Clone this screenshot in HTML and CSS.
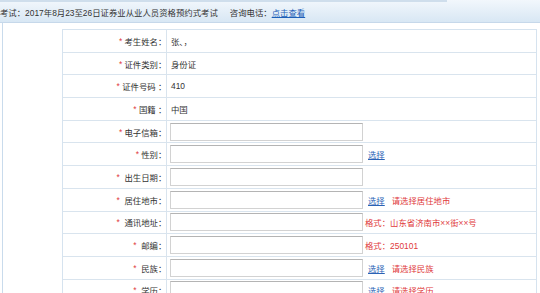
FILE: index.html
```html
<!DOCTYPE html>
<html lang="zh-CN">
<head>
<meta charset="utf-8">
<link rel="stylesheet" href="styles.css">
</head>
<body>
<div class="bar">
  <div class="strip"></div>
  <div class="bar-text">考试：2017年8月23至26日证券业从业人员资格预约式考试<span class="gap"></span>咨询电话：<a class="link" href="#">点击查看</a></div>
</div>
<div class="main">
  <div class="form">
    <div class="row"><div class="lab"><i>*</i> 考生姓名<span class="c">：</span></div><div class="val">张、，</div></div>
    <div class="row"><div class="lab"><i>*</i> 证件类别<span class="c">：</span></div><div class="val">身份证</div></div>
    <div class="row"><div class="lab"><i>*</i> 证件号码 <span class="c">：</span></div><div class="val">410</div></div>
    <div class="row"><div class="lab"><i>*</i> 国籍 <span class="c">：</span></div><div class="val">中国</div></div>
    <div class="row"><div class="lab"><i>*</i> 电子信箱<span class="c">：</span></div><div class="val"><input class="inp" type="text"></div></div>
    <div class="row"><div class="lab"><i>*</i> 性别<span class="c">：</span></div><div class="val"><input class="inp" type="text"><a class="pick" href="#">选择</a></div></div>
    <div class="row"><div class="lab"><i>*</i>&nbsp; 出生日期<span class="c">：</span></div><div class="val"><input class="inp" type="text"></div></div>
    <div class="row"><div class="lab"><i>*</i>&nbsp; 居住地市<span class="c">：</span></div><div class="val"><input class="inp" type="text"><a class="pick" href="#">选择</a><span class="err">请选择居住地市</span></div></div>
    <div class="row"><div class="lab"><i>*</i>&nbsp; 通讯地址<span class="c">：</span></div><div class="val"><input class="inp" type="text"><span class="fmt">格式：山东省济南市××街××号</span></div></div>
    <div class="row"><div class="lab"><i>*</i>&nbsp; 邮编<span class="c">：</span></div><div class="val"><input class="inp" type="text"><span class="fmt">格式：250101</span></div></div>
    <div class="row"><div class="lab"><i>*</i>&nbsp; 民族<span class="c">：</span></div><div class="val"><input class="inp" type="text"><a class="pick" href="#">选择</a><span class="err">请选择民族</span></div></div>
    <div class="row"><div class="lab"><i>*</i>&nbsp; 学历<span class="c">：</span></div><div class="val"><input class="inp" type="text"><a class="pick" href="#">选择</a><span class="err">请选择学历</span></div></div>
  </div>
</div>
</body>
</html>
```
FILE: styles.css
```css
html, body {
  margin: 0;
  padding: 0;
  background: #ffffff;
  overflow: hidden;
}
body {
  font-family: "Liberation Sans", "Noto Sans CJK SC", sans-serif;
  font-size: 8.4px;
  color: #333333;
}
.bar {
  height: 23px;
  box-sizing: border-box;
  background: linear-gradient(#f2f7fc, #d8e7f4);
  border-bottom: 1px solid #c6d8ea;
  display: flex;
  flex-direction: column;
}
.strip {
  width: 447px;
  height: 2px;
  background: #cfdeec;
}
.bar-text {
  height: 20px;
  display: flex;
  align-items: center;
  white-space: nowrap;
  color: #333333;
}
.gap {
  display: inline-block;
  width: 12px;
}
.link {
  color: #1d5fb8;
  text-decoration: underline;
}
.main {
  margin-left: 2px;
  border-left: 1px solid #c9dbec;
  padding: 6px 3px 0 59px;
}
.form {
  border: 1px solid #d6e3ef;
  border-bottom: none;
}
.row {
  display: grid;
  grid-template-columns: 104px 1fr;
  height: 22.7px;
  box-sizing: border-box;
  border-bottom: 1px solid #d9e4ee;
}
.lab {
  box-sizing: border-box;
  border-right: 1px solid #d9e4ee;
  text-align: right;
  padding-right: 4px;
  display: flex;
  align-items: center;
  justify-content: flex-end;
  white-space: pre;
  color: #333333;
}
.lab i {
  font-style: normal;
  color: #e0393b;
}
.c {
  display: inline-block;
  width: 4px;
  overflow: visible;
}
.val {
  display: flex;
  align-items: center;
  padding-left: 4px;
  white-space: nowrap;
}
.inp {
  width: 193px;
  height: 18px;
  margin: 0 0 0 -1px;
  padding: 0;
  box-sizing: border-box;
  border: 1px solid #d2d2d2;
  border-top-color: #b4b4b4;
  background: #ffffff;
  outline: none;
}
.pick {
  margin-left: 5px;
  color: #2a62b5;
  text-decoration: underline;
}
.err {
  margin-left: 7px;
  color: #e0393b;
}
.fmt {
  margin-left: 2px;
  color: #e0393b;
}
```
